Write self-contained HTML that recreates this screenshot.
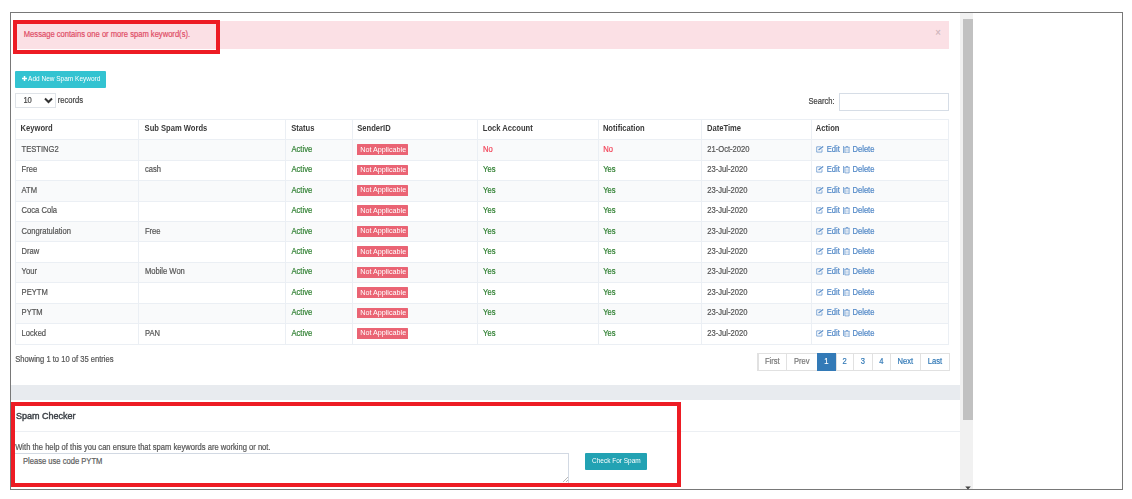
<!DOCTYPE html>
<html><head><meta charset="utf-8"><style>
*{margin:0;padding:0;box-sizing:border-box}
html,body{width:1132px;height:499px;overflow:hidden;background:#fff}
body{position:relative;font-family:"Liberation Sans",sans-serif;font-size:7.6px;color:#555}
.a{position:absolute}
.t{position:absolute;white-space:nowrap;line-height:1;transform:scaleY(1.08);transform-origin:0 55%;-webkit-text-stroke:0.18px currentColor}
.b{font-weight:700;-webkit-text-stroke:0}
</style></head>
<body><div id="w" style="position:absolute;left:0;top:0;width:1132px;height:499px;filter:blur(0.55px)">
<div class="a" style="left:10px;top:12px;width:1113px;height:478px;border:1px solid #787878"></div>
<div class="a" style="left:11px;top:384.6px;width:949px;height:15.7px;background:#e8ebef"></div>
<div class="a" style="left:960px;top:13px;width:13px;height:476px;background:#f1f1f1"></div>
<div class="a" style="left:962.6px;top:19.4px;width:10.4px;height:400.4px;background:#c1c1c1"></div>
<svg class="a" style="left:964px;top:486px" width="8" height="4"><path d="M1.2 0.6H6.8L4 3.4Z" fill="#404040"/></svg>
<div class="a" style="left:15px;top:20.6px;width:934.4px;height:28.1px;background:#fbe0e5"></div>
<div class="t" style="left:23.8px;top:30.8px;color:#df4d66">Message contains one or more spam keyword(s).</div>
<div class="t" style="left:935.3px;top:27.8px;font-size:9.5px;color:#cdb3b9">&times;</div>
<div class="a" style="left:12.5px;top:19.5px;width:207.5px;height:34.5px;border:4px solid #ed1c24"></div>
<div class="a" style="left:15px;top:70.9px;width:91.4px;height:17px;background:#33c3d1;border-radius:1px"></div>
<svg class="a" style="left:21.9px;top:75.9px" width="5" height="5"><path d="M2.5 0V5M0 2.5H5" stroke="#fff" stroke-width="1.5"/></svg>
<div class="t" style="left:28.1px;top:76.3px;font-size:6.5px;color:#fff;-webkit-text-stroke:0">Add New Spam Keyword</div>
<div class="a" style="left:15px;top:93.4px;width:40.5px;height:14.4px;border:1px solid #dfe3e8;background:#fff"></div>
<div class="t" style="left:23.4px;top:96.5px;color:#444">10</div>
<svg class="a" style="left:43.8px;top:97.2px" width="9" height="7"><path d="M1 1.5 L4.5 5 L8 1.5" stroke="#333" stroke-width="2" fill="none"/></svg>
<div class="t" style="left:57.7px;top:96.5px;color:#444">records</div>
<div class="t" style="left:808.5px;top:97.6px;color:#444">Search:</div>
<div class="a" style="left:838.9px;top:93.2px;width:110.1px;height:17.9px;border:1px solid #d6dde6;background:#fff"></div>
<div class="a" style="left:15px;top:139.80px;width:933.40px;height:20.43px;background:#f9fafb"></div>
<div class="a" style="left:15px;top:180.66px;width:933.40px;height:20.43px;background:#f9fafb"></div>
<div class="a" style="left:15px;top:221.52px;width:933.40px;height:20.43px;background:#f9fafb"></div>
<div class="a" style="left:15px;top:262.38px;width:933.40px;height:20.43px;background:#f9fafb"></div>
<div class="a" style="left:15px;top:303.24px;width:933.40px;height:20.43px;background:#f9fafb"></div>
<div class="a" style="left:15px;top:118.70px;width:933.40px;height:1px;background:#ebeff4"></div>
<div class="a" style="left:15px;top:139.30px;width:933.40px;height:1px;background:#ebeff4"></div>
<div class="a" style="left:15px;top:159.73px;width:933.40px;height:1px;background:#ebeff4"></div>
<div class="a" style="left:15px;top:180.16px;width:933.40px;height:1px;background:#ebeff4"></div>
<div class="a" style="left:15px;top:200.59px;width:933.40px;height:1px;background:#ebeff4"></div>
<div class="a" style="left:15px;top:221.02px;width:933.40px;height:1px;background:#ebeff4"></div>
<div class="a" style="left:15px;top:241.45px;width:933.40px;height:1px;background:#ebeff4"></div>
<div class="a" style="left:15px;top:261.88px;width:933.40px;height:1px;background:#ebeff4"></div>
<div class="a" style="left:15px;top:282.31px;width:933.40px;height:1px;background:#ebeff4"></div>
<div class="a" style="left:15px;top:302.74px;width:933.40px;height:1px;background:#ebeff4"></div>
<div class="a" style="left:15px;top:323.17px;width:933.40px;height:1px;background:#ebeff4"></div>
<div class="a" style="left:15px;top:343.60px;width:933.40px;height:1px;background:#ebeff4"></div>
<div class="a" style="left:14.50px;top:118.70px;width:1px;height:225.90px;background:#ebeff4"></div>
<div class="a" style="left:138.10px;top:118.70px;width:1px;height:225.90px;background:#ebeff4"></div>
<div class="a" style="left:284.50px;top:118.70px;width:1px;height:225.90px;background:#ebeff4"></div>
<div class="a" style="left:351.80px;top:118.70px;width:1px;height:225.90px;background:#ebeff4"></div>
<div class="a" style="left:477.30px;top:118.70px;width:1px;height:225.90px;background:#ebeff4"></div>
<div class="a" style="left:597.50px;top:118.70px;width:1px;height:225.90px;background:#ebeff4"></div>
<div class="a" style="left:700.90px;top:118.70px;width:1px;height:225.90px;background:#ebeff4"></div>
<div class="a" style="left:810.80px;top:118.70px;width:1px;height:225.90px;background:#ebeff4"></div>
<div class="a" style="left:947.90px;top:118.70px;width:1px;height:225.90px;background:#ebeff4"></div>
<div class="t b" style="left:20.60px;top:125.40px;color:#3a3a3a">Keyword</div>
<div class="t b" style="left:144.60px;top:125.40px;color:#3a3a3a">Sub Spam Words</div>
<div class="t b" style="left:291.20px;top:125.40px;color:#3a3a3a">Status</div>
<div class="t b" style="left:357.30px;top:125.40px;color:#3a3a3a">SenderID</div>
<div class="t b" style="left:482.80px;top:125.40px;color:#3a3a3a">Lock Account</div>
<div class="t b" style="left:602.90px;top:125.40px;color:#3a3a3a">Notification</div>
<div class="t b" style="left:707.00px;top:125.40px;color:#3a3a3a">DateTime</div>
<div class="t b" style="left:815.80px;top:125.40px;color:#3a3a3a">Action</div>
<div class="t" style="left:21.60px;top:145.80px">TESTING2</div>
<div class="t" style="left:291.50px;top:145.80px;color:#2e7f30">Active</div>
<div class="a" style="left:357.2px;top:144.20px;width:50.7px;height:10.8px;background:#ea6474;border-radius:0.6px"></div>
<div class="t" style="left:360.2px;top:145.50px;font-size:7.2px;font-weight:400;color:#fff;-webkit-text-stroke:0">Not Applicable</div>
<div class="t" style="left:483.10px;top:145.80px;color:#f2465a">No</div>
<div class="t" style="left:603.20px;top:145.80px;color:#f2465a">No</div>
<div class="t" style="left:707.30px;top:145.80px">21-Oct-2020</div>
<svg class="a" style="left:816.2px;top:145.80px" width="8.5" height="7"><path d="M4.9 0.8H0.7V6.1H6V3.3" stroke="#5087c6" stroke-width="0.85" fill="none" opacity="0.8"/><path d="M2.5 4L7.2 0.4" stroke="#5087c6" stroke-width="1.25" opacity="0.9"/></svg>
<div class="t" style="left:826.8px;top:145.80px;color:#5087c6">Edit</div>
<div class="a" style="left:842.5px;top:145.80px;width:0.7px;height:6.8px;background:#5087c6;opacity:.7"></div>
<svg class="a" style="left:843.9px;top:145.70px" width="6.5" height="7.5"><path d="M0.4 1.3H5.6M0.9 1.3V6.9H5.1V1.3M1.9 0.5H4.1" stroke="#5087c6" stroke-width="0.8" fill="none" opacity="0.85"/><path d="M2.1 2.6V5.7M3.9 2.6V5.7" stroke="#5087c6" stroke-width="0.55" opacity="0.7"/></svg>
<div class="t" style="left:852.5px;top:145.80px;color:#5087c6">Delete</div>
<div class="t" style="left:21.60px;top:166.23px">Free</div>
<div class="t" style="left:144.90px;top:166.23px">cash</div>
<div class="t" style="left:291.50px;top:166.23px;color:#2e7f30">Active</div>
<div class="a" style="left:357.2px;top:164.63px;width:50.7px;height:10.8px;background:#ea6474;border-radius:0.6px"></div>
<div class="t" style="left:360.2px;top:165.93px;font-size:7.2px;font-weight:400;color:#fff;-webkit-text-stroke:0">Not Applicable</div>
<div class="t" style="left:483.10px;top:166.23px;color:#2e7f30">Yes</div>
<div class="t" style="left:603.20px;top:166.23px;color:#2e7f30">Yes</div>
<div class="t" style="left:707.30px;top:166.23px">23-Jul-2020</div>
<svg class="a" style="left:816.2px;top:166.23px" width="8.5" height="7"><path d="M4.9 0.8H0.7V6.1H6V3.3" stroke="#5087c6" stroke-width="0.85" fill="none" opacity="0.8"/><path d="M2.5 4L7.2 0.4" stroke="#5087c6" stroke-width="1.25" opacity="0.9"/></svg>
<div class="t" style="left:826.8px;top:166.23px;color:#5087c6">Edit</div>
<div class="a" style="left:842.5px;top:166.23px;width:0.7px;height:6.8px;background:#5087c6;opacity:.7"></div>
<svg class="a" style="left:843.9px;top:166.13px" width="6.5" height="7.5"><path d="M0.4 1.3H5.6M0.9 1.3V6.9H5.1V1.3M1.9 0.5H4.1" stroke="#5087c6" stroke-width="0.8" fill="none" opacity="0.85"/><path d="M2.1 2.6V5.7M3.9 2.6V5.7" stroke="#5087c6" stroke-width="0.55" opacity="0.7"/></svg>
<div class="t" style="left:852.5px;top:166.23px;color:#5087c6">Delete</div>
<div class="t" style="left:21.60px;top:186.66px">ATM</div>
<div class="t" style="left:291.50px;top:186.66px;color:#2e7f30">Active</div>
<div class="a" style="left:357.2px;top:185.06px;width:50.7px;height:10.8px;background:#ea6474;border-radius:0.6px"></div>
<div class="t" style="left:360.2px;top:186.36px;font-size:7.2px;font-weight:400;color:#fff;-webkit-text-stroke:0">Not Applicable</div>
<div class="t" style="left:483.10px;top:186.66px;color:#2e7f30">Yes</div>
<div class="t" style="left:603.20px;top:186.66px;color:#2e7f30">Yes</div>
<div class="t" style="left:707.30px;top:186.66px">23-Jul-2020</div>
<svg class="a" style="left:816.2px;top:186.66px" width="8.5" height="7"><path d="M4.9 0.8H0.7V6.1H6V3.3" stroke="#5087c6" stroke-width="0.85" fill="none" opacity="0.8"/><path d="M2.5 4L7.2 0.4" stroke="#5087c6" stroke-width="1.25" opacity="0.9"/></svg>
<div class="t" style="left:826.8px;top:186.66px;color:#5087c6">Edit</div>
<div class="a" style="left:842.5px;top:186.66px;width:0.7px;height:6.8px;background:#5087c6;opacity:.7"></div>
<svg class="a" style="left:843.9px;top:186.56px" width="6.5" height="7.5"><path d="M0.4 1.3H5.6M0.9 1.3V6.9H5.1V1.3M1.9 0.5H4.1" stroke="#5087c6" stroke-width="0.8" fill="none" opacity="0.85"/><path d="M2.1 2.6V5.7M3.9 2.6V5.7" stroke="#5087c6" stroke-width="0.55" opacity="0.7"/></svg>
<div class="t" style="left:852.5px;top:186.66px;color:#5087c6">Delete</div>
<div class="t" style="left:21.60px;top:207.09px">Coca Cola</div>
<div class="t" style="left:291.50px;top:207.09px;color:#2e7f30">Active</div>
<div class="a" style="left:357.2px;top:205.49px;width:50.7px;height:10.8px;background:#ea6474;border-radius:0.6px"></div>
<div class="t" style="left:360.2px;top:206.79px;font-size:7.2px;font-weight:400;color:#fff;-webkit-text-stroke:0">Not Applicable</div>
<div class="t" style="left:483.10px;top:207.09px;color:#2e7f30">Yes</div>
<div class="t" style="left:603.20px;top:207.09px;color:#2e7f30">Yes</div>
<div class="t" style="left:707.30px;top:207.09px">23-Jul-2020</div>
<svg class="a" style="left:816.2px;top:207.09px" width="8.5" height="7"><path d="M4.9 0.8H0.7V6.1H6V3.3" stroke="#5087c6" stroke-width="0.85" fill="none" opacity="0.8"/><path d="M2.5 4L7.2 0.4" stroke="#5087c6" stroke-width="1.25" opacity="0.9"/></svg>
<div class="t" style="left:826.8px;top:207.09px;color:#5087c6">Edit</div>
<div class="a" style="left:842.5px;top:207.09px;width:0.7px;height:6.8px;background:#5087c6;opacity:.7"></div>
<svg class="a" style="left:843.9px;top:206.99px" width="6.5" height="7.5"><path d="M0.4 1.3H5.6M0.9 1.3V6.9H5.1V1.3M1.9 0.5H4.1" stroke="#5087c6" stroke-width="0.8" fill="none" opacity="0.85"/><path d="M2.1 2.6V5.7M3.9 2.6V5.7" stroke="#5087c6" stroke-width="0.55" opacity="0.7"/></svg>
<div class="t" style="left:852.5px;top:207.09px;color:#5087c6">Delete</div>
<div class="t" style="left:21.60px;top:227.52px">Congratulation</div>
<div class="t" style="left:144.90px;top:227.52px">Free</div>
<div class="t" style="left:291.50px;top:227.52px;color:#2e7f30">Active</div>
<div class="a" style="left:357.2px;top:225.92px;width:50.7px;height:10.8px;background:#ea6474;border-radius:0.6px"></div>
<div class="t" style="left:360.2px;top:227.22px;font-size:7.2px;font-weight:400;color:#fff;-webkit-text-stroke:0">Not Applicable</div>
<div class="t" style="left:483.10px;top:227.52px;color:#2e7f30">Yes</div>
<div class="t" style="left:603.20px;top:227.52px;color:#2e7f30">Yes</div>
<div class="t" style="left:707.30px;top:227.52px">23-Jul-2020</div>
<svg class="a" style="left:816.2px;top:227.52px" width="8.5" height="7"><path d="M4.9 0.8H0.7V6.1H6V3.3" stroke="#5087c6" stroke-width="0.85" fill="none" opacity="0.8"/><path d="M2.5 4L7.2 0.4" stroke="#5087c6" stroke-width="1.25" opacity="0.9"/></svg>
<div class="t" style="left:826.8px;top:227.52px;color:#5087c6">Edit</div>
<div class="a" style="left:842.5px;top:227.52px;width:0.7px;height:6.8px;background:#5087c6;opacity:.7"></div>
<svg class="a" style="left:843.9px;top:227.42px" width="6.5" height="7.5"><path d="M0.4 1.3H5.6M0.9 1.3V6.9H5.1V1.3M1.9 0.5H4.1" stroke="#5087c6" stroke-width="0.8" fill="none" opacity="0.85"/><path d="M2.1 2.6V5.7M3.9 2.6V5.7" stroke="#5087c6" stroke-width="0.55" opacity="0.7"/></svg>
<div class="t" style="left:852.5px;top:227.52px;color:#5087c6">Delete</div>
<div class="t" style="left:21.60px;top:247.95px">Draw</div>
<div class="t" style="left:291.50px;top:247.95px;color:#2e7f30">Active</div>
<div class="a" style="left:357.2px;top:246.35px;width:50.7px;height:10.8px;background:#ea6474;border-radius:0.6px"></div>
<div class="t" style="left:360.2px;top:247.65px;font-size:7.2px;font-weight:400;color:#fff;-webkit-text-stroke:0">Not Applicable</div>
<div class="t" style="left:483.10px;top:247.95px;color:#2e7f30">Yes</div>
<div class="t" style="left:603.20px;top:247.95px;color:#2e7f30">Yes</div>
<div class="t" style="left:707.30px;top:247.95px">23-Jul-2020</div>
<svg class="a" style="left:816.2px;top:247.95px" width="8.5" height="7"><path d="M4.9 0.8H0.7V6.1H6V3.3" stroke="#5087c6" stroke-width="0.85" fill="none" opacity="0.8"/><path d="M2.5 4L7.2 0.4" stroke="#5087c6" stroke-width="1.25" opacity="0.9"/></svg>
<div class="t" style="left:826.8px;top:247.95px;color:#5087c6">Edit</div>
<div class="a" style="left:842.5px;top:247.95px;width:0.7px;height:6.8px;background:#5087c6;opacity:.7"></div>
<svg class="a" style="left:843.9px;top:247.85px" width="6.5" height="7.5"><path d="M0.4 1.3H5.6M0.9 1.3V6.9H5.1V1.3M1.9 0.5H4.1" stroke="#5087c6" stroke-width="0.8" fill="none" opacity="0.85"/><path d="M2.1 2.6V5.7M3.9 2.6V5.7" stroke="#5087c6" stroke-width="0.55" opacity="0.7"/></svg>
<div class="t" style="left:852.5px;top:247.95px;color:#5087c6">Delete</div>
<div class="t" style="left:21.60px;top:268.38px">Your</div>
<div class="t" style="left:144.90px;top:268.38px">Mobile Won</div>
<div class="t" style="left:291.50px;top:268.38px;color:#2e7f30">Active</div>
<div class="a" style="left:357.2px;top:266.78px;width:50.7px;height:10.8px;background:#ea6474;border-radius:0.6px"></div>
<div class="t" style="left:360.2px;top:268.08px;font-size:7.2px;font-weight:400;color:#fff;-webkit-text-stroke:0">Not Applicable</div>
<div class="t" style="left:483.10px;top:268.38px;color:#2e7f30">Yes</div>
<div class="t" style="left:603.20px;top:268.38px;color:#2e7f30">Yes</div>
<div class="t" style="left:707.30px;top:268.38px">23-Jul-2020</div>
<svg class="a" style="left:816.2px;top:268.38px" width="8.5" height="7"><path d="M4.9 0.8H0.7V6.1H6V3.3" stroke="#5087c6" stroke-width="0.85" fill="none" opacity="0.8"/><path d="M2.5 4L7.2 0.4" stroke="#5087c6" stroke-width="1.25" opacity="0.9"/></svg>
<div class="t" style="left:826.8px;top:268.38px;color:#5087c6">Edit</div>
<div class="a" style="left:842.5px;top:268.38px;width:0.7px;height:6.8px;background:#5087c6;opacity:.7"></div>
<svg class="a" style="left:843.9px;top:268.28px" width="6.5" height="7.5"><path d="M0.4 1.3H5.6M0.9 1.3V6.9H5.1V1.3M1.9 0.5H4.1" stroke="#5087c6" stroke-width="0.8" fill="none" opacity="0.85"/><path d="M2.1 2.6V5.7M3.9 2.6V5.7" stroke="#5087c6" stroke-width="0.55" opacity="0.7"/></svg>
<div class="t" style="left:852.5px;top:268.38px;color:#5087c6">Delete</div>
<div class="t" style="left:21.60px;top:288.81px">PEYTM</div>
<div class="t" style="left:291.50px;top:288.81px;color:#2e7f30">Active</div>
<div class="a" style="left:357.2px;top:287.21px;width:50.7px;height:10.8px;background:#ea6474;border-radius:0.6px"></div>
<div class="t" style="left:360.2px;top:288.51px;font-size:7.2px;font-weight:400;color:#fff;-webkit-text-stroke:0">Not Applicable</div>
<div class="t" style="left:483.10px;top:288.81px;color:#2e7f30">Yes</div>
<div class="t" style="left:603.20px;top:288.81px;color:#2e7f30">Yes</div>
<div class="t" style="left:707.30px;top:288.81px">23-Jul-2020</div>
<svg class="a" style="left:816.2px;top:288.81px" width="8.5" height="7"><path d="M4.9 0.8H0.7V6.1H6V3.3" stroke="#5087c6" stroke-width="0.85" fill="none" opacity="0.8"/><path d="M2.5 4L7.2 0.4" stroke="#5087c6" stroke-width="1.25" opacity="0.9"/></svg>
<div class="t" style="left:826.8px;top:288.81px;color:#5087c6">Edit</div>
<div class="a" style="left:842.5px;top:288.81px;width:0.7px;height:6.8px;background:#5087c6;opacity:.7"></div>
<svg class="a" style="left:843.9px;top:288.71px" width="6.5" height="7.5"><path d="M0.4 1.3H5.6M0.9 1.3V6.9H5.1V1.3M1.9 0.5H4.1" stroke="#5087c6" stroke-width="0.8" fill="none" opacity="0.85"/><path d="M2.1 2.6V5.7M3.9 2.6V5.7" stroke="#5087c6" stroke-width="0.55" opacity="0.7"/></svg>
<div class="t" style="left:852.5px;top:288.81px;color:#5087c6">Delete</div>
<div class="t" style="left:21.60px;top:309.24px">PYTM</div>
<div class="t" style="left:291.50px;top:309.24px;color:#2e7f30">Active</div>
<div class="a" style="left:357.2px;top:307.64px;width:50.7px;height:10.8px;background:#ea6474;border-radius:0.6px"></div>
<div class="t" style="left:360.2px;top:308.94px;font-size:7.2px;font-weight:400;color:#fff;-webkit-text-stroke:0">Not Applicable</div>
<div class="t" style="left:483.10px;top:309.24px;color:#2e7f30">Yes</div>
<div class="t" style="left:603.20px;top:309.24px;color:#2e7f30">Yes</div>
<div class="t" style="left:707.30px;top:309.24px">23-Jul-2020</div>
<svg class="a" style="left:816.2px;top:309.24px" width="8.5" height="7"><path d="M4.9 0.8H0.7V6.1H6V3.3" stroke="#5087c6" stroke-width="0.85" fill="none" opacity="0.8"/><path d="M2.5 4L7.2 0.4" stroke="#5087c6" stroke-width="1.25" opacity="0.9"/></svg>
<div class="t" style="left:826.8px;top:309.24px;color:#5087c6">Edit</div>
<div class="a" style="left:842.5px;top:309.24px;width:0.7px;height:6.8px;background:#5087c6;opacity:.7"></div>
<svg class="a" style="left:843.9px;top:309.14px" width="6.5" height="7.5"><path d="M0.4 1.3H5.6M0.9 1.3V6.9H5.1V1.3M1.9 0.5H4.1" stroke="#5087c6" stroke-width="0.8" fill="none" opacity="0.85"/><path d="M2.1 2.6V5.7M3.9 2.6V5.7" stroke="#5087c6" stroke-width="0.55" opacity="0.7"/></svg>
<div class="t" style="left:852.5px;top:309.24px;color:#5087c6">Delete</div>
<div class="t" style="left:21.60px;top:329.67px">Locked</div>
<div class="t" style="left:144.90px;top:329.67px">PAN</div>
<div class="t" style="left:291.50px;top:329.67px;color:#2e7f30">Active</div>
<div class="a" style="left:357.2px;top:328.07px;width:50.7px;height:10.8px;background:#ea6474;border-radius:0.6px"></div>
<div class="t" style="left:360.2px;top:329.37px;font-size:7.2px;font-weight:400;color:#fff;-webkit-text-stroke:0">Not Applicable</div>
<div class="t" style="left:483.10px;top:329.67px;color:#2e7f30">Yes</div>
<div class="t" style="left:603.20px;top:329.67px;color:#2e7f30">Yes</div>
<div class="t" style="left:707.30px;top:329.67px">23-Jul-2020</div>
<svg class="a" style="left:816.2px;top:329.67px" width="8.5" height="7"><path d="M4.9 0.8H0.7V6.1H6V3.3" stroke="#5087c6" stroke-width="0.85" fill="none" opacity="0.8"/><path d="M2.5 4L7.2 0.4" stroke="#5087c6" stroke-width="1.25" opacity="0.9"/></svg>
<div class="t" style="left:826.8px;top:329.67px;color:#5087c6">Edit</div>
<div class="a" style="left:842.5px;top:329.67px;width:0.7px;height:6.8px;background:#5087c6;opacity:.7"></div>
<svg class="a" style="left:843.9px;top:329.57px" width="6.5" height="7.5"><path d="M0.4 1.3H5.6M0.9 1.3V6.9H5.1V1.3M1.9 0.5H4.1" stroke="#5087c6" stroke-width="0.8" fill="none" opacity="0.85"/><path d="M2.1 2.6V5.7M3.9 2.6V5.7" stroke="#5087c6" stroke-width="0.55" opacity="0.7"/></svg>
<div class="t" style="left:852.5px;top:329.67px;color:#5087c6">Delete</div>
<div class="t" style="left:15.2px;top:356.0px;color:#555">Showing 1 to 10 of 35 entries</div>
<div class="a" style="left:757.8px;top:352.6px;width:191.8px;height:18.7px;border:1px solid #e1e1e1;background:#fff"></div>
<div class="a" style="left:757.30px;top:352.6px;width:1px;height:18.7px;background:#e1e1e1"></div>
<div class="t" style="left:757.8px;width:29.1px;text-align:center;top:357.9px;color:#777">First</div>
<div class="a" style="left:786.40px;top:352.6px;width:1px;height:18.7px;background:#e1e1e1"></div>
<div class="t" style="left:786.9px;width:29.7px;text-align:center;top:357.9px;color:#777">Prev</div>
<div class="a" style="left:816.6px;top:352.6px;width:19.4px;height:18.7px;background:#337ab7"></div>
<div class="t" style="left:816.6px;width:19.4px;text-align:center;top:357.9px;color:#fff">1</div>
<div class="a" style="left:835.50px;top:352.6px;width:1px;height:18.7px;background:#e1e1e1"></div>
<div class="t" style="left:836.0px;width:17.4px;text-align:center;top:357.9px;color:#337ab7">2</div>
<div class="a" style="left:852.90px;top:352.6px;width:1px;height:18.7px;background:#e1e1e1"></div>
<div class="t" style="left:853.4px;width:19.0px;text-align:center;top:357.9px;color:#337ab7">3</div>
<div class="a" style="left:871.90px;top:352.6px;width:1px;height:18.7px;background:#e1e1e1"></div>
<div class="t" style="left:872.4px;width:17.9px;text-align:center;top:357.9px;color:#337ab7">4</div>
<div class="a" style="left:889.80px;top:352.6px;width:1px;height:18.7px;background:#e1e1e1"></div>
<div class="t" style="left:890.3px;width:30.2px;text-align:center;top:357.9px;color:#337ab7">Next</div>
<div class="a" style="left:920.00px;top:352.6px;width:1px;height:18.7px;background:#e1e1e1"></div>
<div class="t" style="left:920.5px;width:29.1px;text-align:center;top:357.9px;color:#337ab7">Last</div>
<div class="a" style="left:11px;top:431.0px;width:949px;height:1px;background:#eceff3"></div>
<div class="t" style="left:16px;top:412.3px;font-size:9px;color:#3a3f45;-webkit-text-stroke:0.4px #3a3f45;transform:none">Spam Checker</div>
<div class="t" style="left:15.2px;top:443.8px;color:#555">With the help of this you can ensure that spam keywords are working or not.</div>
<div class="a" style="left:11px;top:452.8px;width:558px;height:31px;border:1px solid #d2d9e3;background:#fff"></div>
<div class="t" style="left:23px;top:457.8px;color:#5e5e5e">Please use code PYTM</div>
<svg class="a" style="left:561px;top:475px" width="8" height="8"><path d="M7 2L2 7M7 5L5 7" stroke="#999" stroke-width="0.7"/></svg>
<div class="a" style="left:585.1px;top:453px;width:62.2px;height:17px;background:#22a2b3;border-radius:1px"></div>
<div class="t" style="left:592px;top:457.9px;font-size:6.5px;color:#fff;-webkit-text-stroke:0">Check For Spam</div>
<div class="a" style="left:10.8px;top:402px;width:670px;height:85.4px;border:4.4px solid #ed1c24"></div>
</div></body></html>
